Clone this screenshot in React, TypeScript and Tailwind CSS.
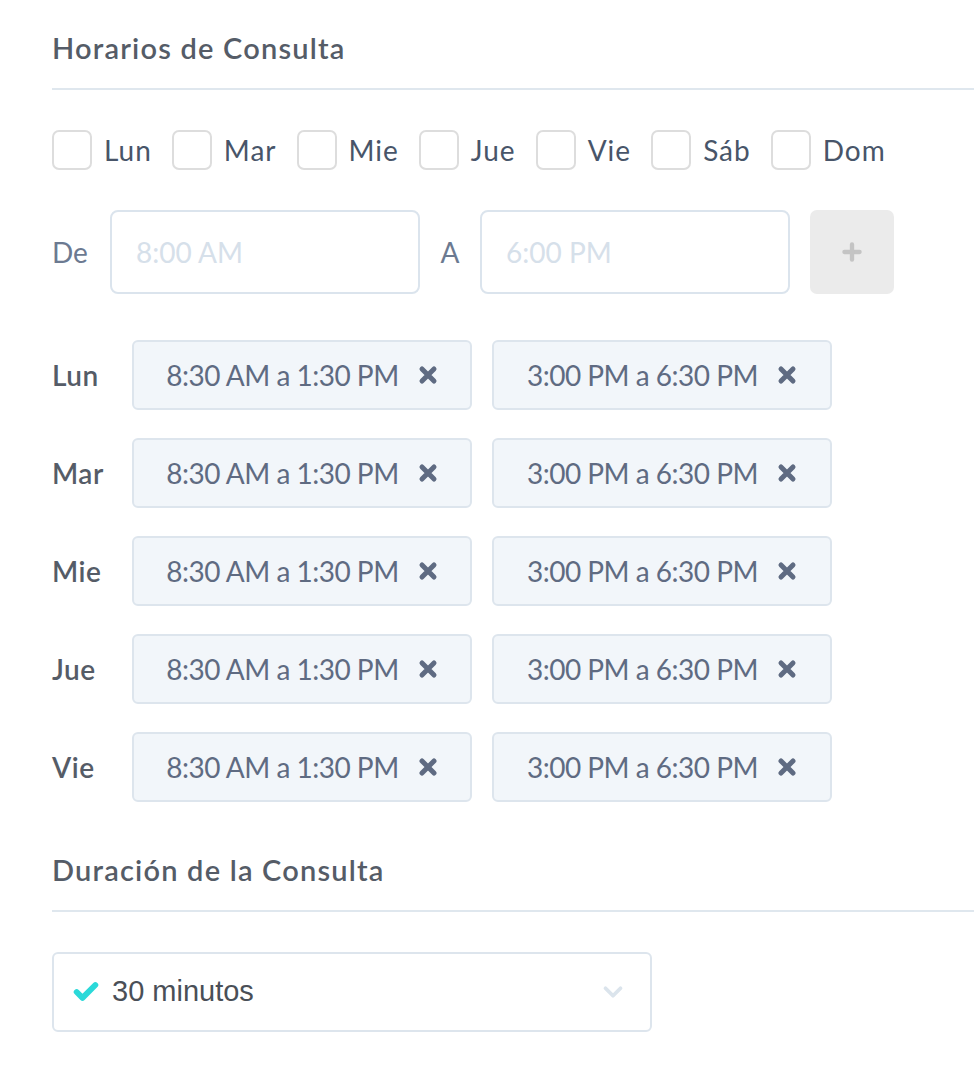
import { Plus, Check, ChevronDown } from 'lucide-react';

const days = ['Lun', 'Mar', 'Mie', 'Jue', 'Vie', 'Sáb', 'Dom'];

const schedule = [
    { day: 'Lun', slots: ['8:30 AM a 1:30 PM', '3:00 PM a 6:30 PM'] },
    { day: 'Mar', slots: ['8:30 AM a 1:30 PM', '3:00 PM a 6:30 PM'] },
    { day: 'Mie', slots: ['8:30 AM a 1:30 PM', '3:00 PM a 6:30 PM'] },
    { day: 'Jue', slots: ['8:30 AM a 1:30 PM', '3:00 PM a 6:30 PM'] },
    { day: 'Vie', slots: ['8:30 AM a 1:30 PM', '3:00 PM a 6:30 PM'] },
];

function SectionTitle({ children, className = '' }: { children: React.ReactNode; className?: string }) {
    return (
        <div className={`border-b-2 border-[#dfe7ee] ${className}`}>
            <h2 className="text-[29px] leading-[40px] font-semibold tracking-[1.2px] text-[#555c67]">{children}</h2>
        </div>
    );
}

function RemoveIcon() {
    return (
        <svg viewBox="0 0 20 20" className="w-[20px] h-[20px] text-[#5f6b82]">
            <path d="M4 4 L16 16 M16 4 L4 16" stroke="currentColor" strokeWidth={5} strokeLinecap="round" fill="none" />
        </svg>
    );
}

function Slot({ label }: { label: string }) {
    return (
        <div className="w-[340px] h-[70px] flex items-center justify-center gap-[19px] bg-[#f2f6fa] border-2 border-[#dde5ed] rounded-[6px]">
            <span className="text-[28px] tracking-[-0.5px] text-[#5f6b82]">{label}</span>
            <RemoveIcon />
        </div>
    );
}

export default function App() {
    return (
        <div className="min-h-screen bg-white pl-[52px] font-['Lato',sans-serif]">
            {/* Horarios */}
            <SectionTitle className="pt-[28px] pb-[20px]">Horarios de Consulta</SectionTitle>

            <div className="mt-[40px] flex items-center gap-[20px]">
                {days.map(d => (
                    <label key={d} className="flex items-center gap-[12px]">
                        <span className="w-[40px] h-[40px] rounded-[7px] border-2 border-[#dddddd] bg-white" />
                        <span className="text-[28px] leading-[40px] tracking-[1px] text-[#485569]">{d}</span>
                    </label>
                ))}
            </div>

            <div className="mt-[40px] flex items-center">
                <span className="w-[58px] text-[28px] text-[#6c7a91]">De</span>
                <input
                    placeholder="8:00 AM"
                    className="w-[310px] h-[84px] px-[24px] rounded-[8px] border-2 border-[#dbe4ed] text-[28px] placeholder:text-[#d6e0ea] outline-none"
                />
                <span className="w-[60px] text-center text-[28px] text-[#6c7a91]">A</span>
                <input
                    placeholder="6:00 PM"
                    className="w-[310px] h-[84px] px-[24px] rounded-[8px] border-2 border-[#dbe4ed] text-[28px] placeholder:text-[#d6e0ea] outline-none"
                />
                <button className="ml-[20px] w-[84px] h-[84px] rounded-[7px] bg-[#ebebeb] flex items-center justify-center">
                    <Plus className="w-[26px] h-[26px] text-[#c4c4c4]" strokeWidth={4} />
                </button>
            </div>

            <div className="mt-[46px] flex flex-col gap-[28px]">
                {schedule.map(row => (
                    <div key={row.day} className="flex items-center">
                        <span className="w-[80px] text-[28px] font-semibold tracking-[0.5px] text-[#555c67]">{row.day}</span>
                        <div className="flex gap-[20px]">
                            {row.slots.map((s, i) => (
                                <Slot key={i} label={s} />
                            ))}
                        </div>
                    </div>
                ))}
            </div>

            {/* Duración */}
            <SectionTitle className="mt-[48px] pb-[20px]">Duración de la Consulta</SectionTitle>

            <div className="mt-[40px] w-[600px] h-[80px] px-[18px] flex items-center border-2 border-[#dde5ed] rounded-[6px]">
                <Check className="w-[28px] h-[28px] text-[#2bd9d9]" strokeWidth={5} />
                <span className="ml-[12px] text-[29px] text-[#4a4f57] font-['Liberation_Sans',sans-serif]">30 minutos</span>
                <ChevronDown className="ml-auto mr-[4px] w-[30px] h-[30px] text-[#dbe4ec]" strokeWidth={3} />
            </div>
        </div>
    );
}
